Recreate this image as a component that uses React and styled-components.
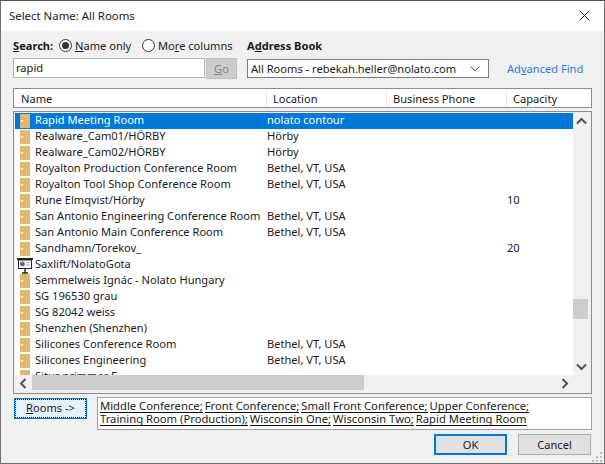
import React from "react";
import styled, { createGlobalStyle } from "styled-components";

const Global = createGlobalStyle`
  html, body { margin: 0; padding: 0; background: #4a4a42; }
  #root { width: 605px; height: 464px; overflow: hidden; }
  * { box-sizing: border-box; }
`;

const Dialog = styled.div`
  width: 605px; height: 464px; background: #f0f0f0;
  border: 1px solid #6f6f6f; border-top: 1px solid #555;
  font: 11.1px "Noto Sans", "Open Sans", sans-serif; color: #1a1a1a;
  display: flex; flex-direction: column; position: relative;
`;
const TitleBar = styled.div`
  height: 30px; background: #fff; display: flex; align-items: center; justify-content: space-between;
  padding: 0 14px 2px 8px; font-size: 11.4px; flex: none;
`;
const Body = styled.div`
  flex: 1; display: flex; flex-direction: column; padding: 0 12px 0 12px; min-height: 0;
`;
const SearchRow = styled.div`
  height: 27px; display: flex; align-items: flex-end; padding-bottom: 5px; flex: none;
`;
const Label = styled.span`
  font-weight: 700; width: ${p => p.$w}px; flex: none;
`;
const Radio = styled.label`
  display: flex; align-items: center; gap: 3px; width: ${p => p.$w}px; flex: none; white-space: nowrap;
`;
const Dot = styled.span`
  width: 13px; height: 13px; border-radius: 50%; border: 1px solid #333; background: #fff;
  display: flex; align-items: center; justify-content: center; flex: none;
  &::after { content: ""; width: 7px; height: 7px; border-radius: 50%; background: ${p => p.$on ? "#333" : "transparent"}; }
`;
const ControlRow = styled.div`
  display: flex; align-items: flex-start; height: 21px; flex: none;
`;
const Input = styled.div`
  width: 192px; height: 20px; background: #fff; border: 1px solid #b4b4b4; padding: 0 2px; line-height: 17px; flex: none;
`;
const GoButton = styled.div`
  width: 31px; height: 21px; margin-left: 1px; background: #ccc; border: 1px solid #bfbfbf; color: #838383;
  text-align: center; line-height: 19px; flex: none;
`;
const Select = styled.div`
  width: 242px; height: 19px; margin: 1px 0 0 10px; background: #fff; border: 1px solid #7a7a7a; display: flex;
  align-items: center; justify-content: space-between; padding: 0 8px 0 3px; flex: none;
`;
const Link = styled.span`
  margin-left: 18px; color: #2a7fd4; line-height: 21px; white-space: nowrap;
`;
const Header = styled.div`
  margin-top: 9px; height: 20px; background: #fff; border: 1px solid #8c8c8c; display: flex; align-items: center; flex: none;
`;
const HeaderCell = styled.div`
  width: ${p => p.$w}px; height: 17px; line-height: 17px; padding-left: ${p => p.$pad}px; flex: none;
  border-right: ${p => p.$last ? "none" : "1px solid #e5e5e5"}; white-space: nowrap;
`;
const ListBox = styled.div`
  margin-top: 3px; height: 283px; background: #f0f0f0; border: 1px solid #8c8c8c; padding: 1px;
  display: grid; grid-template-columns: 1fr 17px; grid-template-rows: 1fr 17px; flex: none;
`;
const Rows = styled.div`
  background: #fff; overflow: hidden; min-height: 0;
`;
const Row = styled.div`
  height: 16px; display: flex; align-items: center; white-space: nowrap; padding-left: 1px; padding-bottom: 3px;
  background: ${p => p.$sel ? "#0078d7" : "transparent"}; color: ${p => p.$sel ? "#fff" : "#1a1a1a"};
`;
const RoomIcon = styled.span`
  align-self: flex-start; width: 10px; height: 14px; flex: none; background: #e0b873; position: relative; margin: 1px 5px 0 4px;
  &::after { content: ""; position: absolute; left: 1px; top: 6px; width: 2px; height: 2px; background: #fff3dc; }
`;
const IconSlot = styled.span`
  align-self: flex-start; width: 16px; height: 16px; flex: none; margin: 1px 2px 0 1px; display: block;
`;
const Name = styled.span`
  width: 232px; flex: none;
`;
const Loc = styled.span`
  width: 240px; flex: none;
`;
const VTrack = styled.div`
  background: #f0f0f0; display: flex; flex-direction: column; align-items: center; justify-content: space-between; position: relative;
`;
const VThumb = styled.div`
  position: absolute; left: 0; right: 2px; top: 186px; height: 20px; background: #cdcdcd;
`;
const HTrack = styled.div`
  background: #f0f0f0; display: flex; align-items: center; justify-content: space-between; position: relative;
`;
const HThumb = styled.div`
  position: absolute; top: 0; bottom: 2px; left: 17px; width: 332px; background: #cdcdcd;
`;
const Arrow = styled.svg`
  width: 17px; height: 17px; flex: none;
`;
const Corner = styled.div` background: #f0f0f0; `;
const RoomsRow = styled.div`
  margin-top: 3px; display: flex; align-items: flex-start; height: 34px; flex: none;
`;
const RoomsButton = styled.div`
  width: 73px; height: 21px; margin: 1px 0 0 1px; background: #e5f1fb; border: 1px solid #0078d7; text-align: center;
  line-height: 17px; outline: 1px dotted #111; outline-offset: -2px; flex: none;
`;
const Recipients = styled.div`
  width: 495px; height: 33px; margin-left: 10px; background: #fff; border: 1px solid #a0a0a0; padding: 2px 2px; line-height: 13px;
  font-size: 11.25px; white-space: nowrap;
`;
const RecipientLine = styled.div`
  height: 13px; display: flex; gap: 2px;
`;
const Recipient = styled.span`
  display: block; height: 13px; line-height: 12px; border-bottom: 1px solid #111;
`;
const Footer = styled.div`
  display: flex; justify-content: flex-end; gap: 11px; margin-top: 3px; padding-right: 1px; flex: none;
`;
const Btn = styled.div`
  width: 73px; height: 21px; background: #e1e1e1; text-align: center; line-height: ${p => p.$def ? "17px" : "19px"};
  border: ${p => p.$def ? "2px solid #0078d7" : "1px solid #adadad"};
`;
const Grip = styled.svg`
  position: absolute; right: 2px; bottom: 1px; width: 10px; height: 10px;
`;
const U = styled.span` text-decoration: underline; `;

const rows = [
  ["Rapid Meeting Room", "nolato contour", ""],
  ["Realware_Cam01/HÖRBY", "Hörby", ""],
  ["Realware_Cam02/HÖRBY", "Hörby", ""],
  ["Royalton Production Conference Room", "Bethel, VT, USA", ""],
  ["Royalton Tool Shop Conference Room", "Bethel, VT, USA", ""],
  ["Rune Elmqvist/Hörby", "", "10"],
  ["San Antonio Engineering Conference Room", "Bethel, VT, USA", ""],
  ["San Antonio Main Conference Room", "Bethel, VT, USA", ""],
  ["Sandhamn/Torekov_", "", "20"],
  ["Saxlift/NolatoGota", "", "", true],
  ["Semmelweis Ignác - Nolato Hungary", "", ""],
  ["SG 196530 grau", "", ""],
  ["SG 82042 weiss", "", ""],
  ["Shenzhen (Shenzhen)", "", ""],
  ["Silicones Conference Room", "Bethel, VT, USA", ""],
  ["Silicones Engineering", "Bethel, VT, USA", ""],
  ["Situr nrimmer F", "", ""],
];

const line1 = ["Middle Conference;", "Front Conference;", "Small Front Conference;", "Upper Conference;"];
const line2 = ["Training Room (Production);", "Wisconsin One;", "Wisconsin Two;", "Rapid Meeting Room"];

const Presenter = () => (
  <IconSlot>
    <svg width="16" height="16" viewBox="0 0 16 16" style={{ display: "block" }}>
      <path d="M0 1h16" stroke="#222" strokeWidth="2" />
      <rect x="1.5" y="2" width="13" height="8.5" fill="#fff" stroke="#222" />
      <circle cx="5.5" cy="6" r="2.4" fill="#3a6fc0" />
      <path d="M5.5 6V3.6A2.4 2.4 0 0 0 3.1 6z" fill="#d8553c" />
      <path d="M9.5 4.5h3M9.5 7h3" stroke="#999" />
      <path d="M8 11v3.5M5 15h6" stroke="#222" strokeWidth="1.4" />
    </svg>
  </IconSlot>
);

const Chevron = ({ d }) => (
  <Arrow viewBox="0 0 17 17"><path d={d} fill="none" stroke="#505050" strokeWidth="2" /></Arrow>
);

export default function App() {
  return (
    <>
      <Global />
      <Dialog>
        <TitleBar>
          <span>Select Name: All Rooms</span>
          <svg width="11" height="11" viewBox="0 0 11 11"><path d="M.5.5l10 10M10.5.5l-10 10" stroke="#222" strokeWidth="1" /></svg>
        </TitleBar>
        <Body>
          <SearchRow>
            <Label $w={46}><U>S</U>earch:</Label>
            <Radio $w={83}><Dot $on /><span><U>N</U>ame only</span></Radio>
            <Radio $w={105}><Dot /><span>Mo<U>r</U>e columns</span></Radio>
            <Label $w={100}>A<U>d</U>dress Book</Label>
          </SearchRow>
          <ControlRow>
            <Input>rapid</Input>
            <GoButton><U>G</U>o</GoButton>
            <Select>
              <span>All Rooms - rebekah.heller@nolato.com</span>
              <svg width="10" height="6" viewBox="0 0 10 6"><path d="M.5.5l4.5 4.5 4.5-4.5" fill="none" stroke="#555" /></svg>
            </Select>
            <Link>Ad<U>v</U>anced Find</Link>
          </ControlRow>
          <Header>
            <HeaderCell $w={253} $pad={7}>Name</HeaderCell>
            <HeaderCell $w={120} $pad={6}>Location</HeaderCell>
            <HeaderCell $w={120} $pad={6}>Business Phone</HeaderCell>
            <HeaderCell $w={80} $pad={6} $last>Capacity</HeaderCell>
          </Header>
          <ListBox>
            <Rows>
              {rows.map((r) => (
                <Row key={r[0]} $sel={r[0].startsWith("Rapid")}>
                  {r[3] ? <Presenter /> : <RoomIcon />}
                  <Name>{r[0]}</Name>
                  <Loc>{r[1]}</Loc>
                  <span>{r[2]}</span>
                </Row>
              ))}
            </Rows>
            <VTrack>
              <Chevron d="M4 10.5l4.5-4.5 4.5 4.5" />
              <VThumb />
              <Chevron d="M4 6.5l4.5 4.5 4.5-4.5" />
            </VTrack>
            <HTrack>
              <Chevron d="M10.5 4l-4.5 4.5 4.5 4.5" />
              <HThumb />
              <Chevron d="M6.5 4l4.5 4.5-4.5 4.5" />
            </HTrack>
            <Corner />
          </ListBox>
          <RoomsRow>
            <RoomsButton><U>R</U>ooms -&gt;</RoomsButton>
            <Recipients>
              <RecipientLine>{line1.map((t) => <Recipient key={t}>{t}</Recipient>)}</RecipientLine>
              <RecipientLine>{line2.map((t) => <Recipient key={t}>{t}</Recipient>)}</RecipientLine>
            </Recipients>
          </RoomsRow>
          <Footer>
            <Btn $def>OK</Btn>
            <Btn>Cancel</Btn>
          </Footer>
        </Body>
        <Grip viewBox="0 0 10 10">
          <path d="M8 0h2v2H8zM4 4h2v2H4zM8 4h2v2H8zM0 8h2v2H0zM4 8h2v2H4zM8 8h2v2H8z" fill="#bcbcbc" />
        </Grip>
      </Dialog>
    </>
  );
}
